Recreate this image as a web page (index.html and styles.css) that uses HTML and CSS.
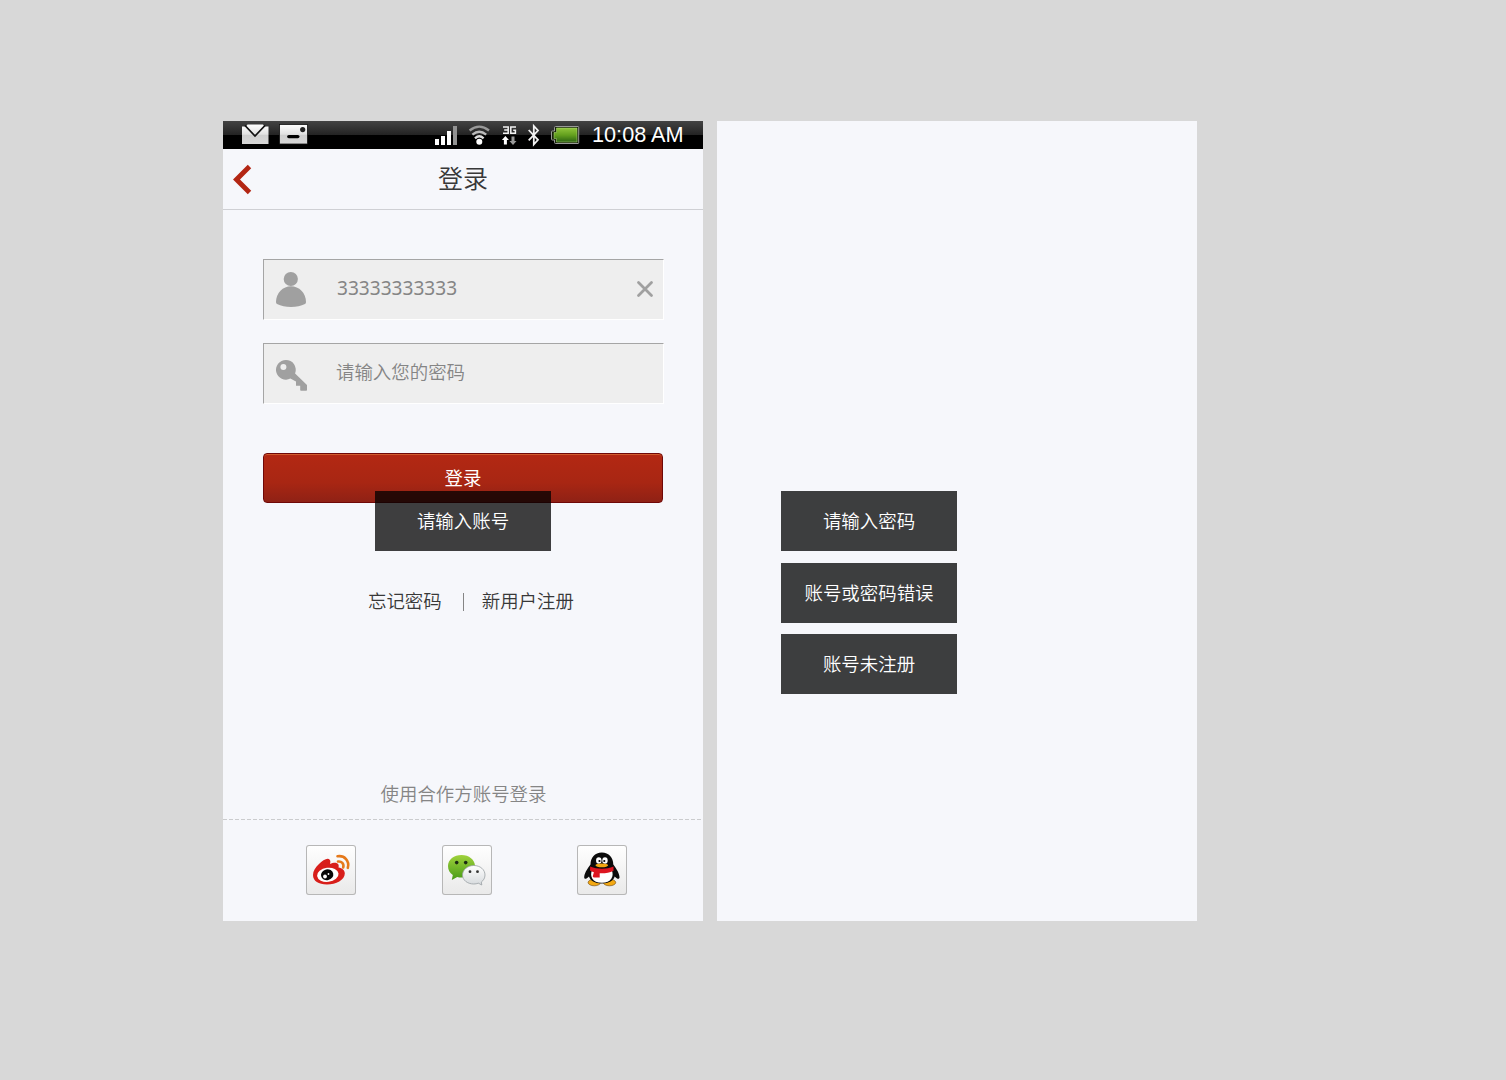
FILE: index.html
```html
<!DOCTYPE html>
<html lang="zh-CN">
<head>
<meta charset="utf-8">
<title>登录</title>
<link rel="stylesheet" href="styles.css">
</head>
<body>
<main class="board">
  <section class="screen">
    <div class="status">
      <svg class="status-icons" width="362" height="28" viewBox="0 0 362 28">
        <defs>
          <linearGradient id="paper" x1="0" y1="0" x2="0" y2="1"><stop offset="0" stop-color="#fff"/><stop offset=".5" stop-color="#e2e2e2"/><stop offset=".55" stop-color="#cfcfcf"/><stop offset="1" stop-color="#d8d8d8"/></linearGradient>
          <linearGradient id="cell" x1="0" y1="0" x2="0" y2="1"><stop offset="0" stop-color="#8fc43a"/><stop offset=".5" stop-color="#64a01e"/><stop offset="1" stop-color="#2c6412"/></linearGradient>
        </defs>
        <path d="M19 5.500h4l1.500-2h15.500l1.500 2H45.500V23H19z" fill="url(#paper)"/>
        <path d="M22 4.500l10 10.500L42 4.500" fill="none" stroke="#111" stroke-width="1.800"/>
        <rect x="56.500" y="3.500" width="28" height="19.500" fill="url(#paper)" stroke="#111" stroke-width=".8"/>
        <circle cx="79.700" cy="8.600" r="2.600" fill="#222"/>
        <path d="M65.800 15.600h9" stroke="#000" stroke-width="3.400" stroke-linecap="round"/>
        <path d="M212 18h4v6h-4zM218 15h4v9h-4zM224 10h4v14h-4z" fill="#fff"/>
        <path d="M230 5h4v19h-4z" fill="#929292"/>
        <g fill="none" stroke-width="2.300">
          <path d="M246.600 9.500q9.700-7.800 19.400 0" stroke="#999"/>
          <path d="M249.400 13.600q6.900-5.700 13.800 0" stroke="#bbb"/>
          <path d="M252 17.300q4.300-4 8.600 0" stroke="#ddd"/>
        </g>
        <circle cx="256.300" cy="20.800" r="3" fill="#fff"/>
        <path d="M280 6h5.200v6.200H280M281.200 9.100h4M293 6h-5.200v6.200h4.600V9.200h-2.200" fill="none" stroke="#f3f3f3" stroke-width="1.500"/>
        <path d="M282.400 15l3.500 4h-2v4.500h-3V19h-2z" fill="#fff"/>
        <path d="M290 24l3.500-4h-2v-4.500h-3V20h-2z" fill="#999"/>
        <path d="M305.700 9l9.300 9.800-4.200 4.700V5l4.200 4.500-9.300 9.800" fill="none" stroke="#f3f3f3" stroke-width="1.800"/>
        <path d="M332.500 5.500h22.500q.7 0 .7.700v15.600q0 .7-.7.700h-22.500q-1 0-1-1V19h-2.200q-.8 0-.8-.8v-7.400q0-.8.8-.8h2.200V6.500q0-1 1-1z" fill="#182509" stroke="#999" stroke-width="1"/>
        <path d="M333.500 7H354v14h-20.500v-3.500H331v-6h2.500z" fill="url(#cell)" stroke="#b7de80" stroke-width=".5"/>
      </svg>
      <span class="clock">10:08 AM</span>
    </div>
    <header class="bar">
      <svg class="back" width="40" height="60" viewBox="0 0 40 60"><path d="M26.500 17.500L13.500 30.400l13 13" fill="none" stroke="#b32613" stroke-width="4.900"/></svg>
      <h1 class="title">登录</h1>
    </header>
    <form class="form">
      <div class="field">
        <svg class="field-icon" width="73" height="59" viewBox="1 1 73 59"><circle cx="27.800" cy="20" r="7.100"/><path d="M13 43C13 34 20 27.300 28 27.300S43 34 43 43q0 1.500-1 2-6 3-14 3t-14-3q-1-.5-1-2z"/></svg>
        <span class="value">33333333333</span>
        <svg class="clear" width="36" height="59" viewBox="364 1 36 59"><path d="M375.500 23.500l13 13m0-13l-13 13" fill="none" stroke="#a0a0a0" stroke-width="2.800" stroke-linecap="round"/></svg>
      </div>
      <div class="field">
        <svg class="field-icon" width="73" height="59" viewBox="1 1 73 59"><path fill-rule="evenodd" d="M22.900 16.900a9.900 9.900 0 0 1 9.200 13.500L44 42v5q0 .8-.8.800H38q-.8 0-.8-.8v-4.200H33v-4.300l-1-.5L27.400 35.600A9.900 9.900 0 1 1 22.900 16.900zM20.400 20.900a3 3 0 1 0 0 6 3 3 0 1 0 0-6z"/></svg>
        <span class="value hint">请输入您的密码</span>
      </div>
      <div class="submit">登录</div>
      <div class="links"><span>忘记密码</span><i class="divider"></i><span>新用户注册</span></div>
    </form>
    <p class="partner">使用合作方账号登录</p>
    <svg class="dash" width="480" height="2" viewBox="0 0 480 2"><path d="M0 .5H478" stroke="#cbccce" stroke-dasharray="4 2"/></svg>
    <div class="social">
      <div class="tile"><svg width="50" height="50" viewBox="0 0 50 50">
        <path d="M23.500 14.500c1.200 1 1 3 .5 4.500 2-.7 4.500-1.500 6.500-1 2.300.6 2.500 2.500 2 4.500 3.700.7 6.300 2.500 6.300 6 0 6.500-8.800 11-17.800 11C12.500 39.500 7 36 7 30c0-4 2.500-8 6-11 3.500-3.500 8.500-6.500 10.500-4.500z" fill="#d81e1a"/>
        <ellipse cx="21.800" cy="29.800" rx="10.800" ry="7" transform="rotate(-7 21.800 29.800)" fill="#fff"/>
        <ellipse cx="21.200" cy="29.800" rx="6.200" ry="5.400" transform="rotate(-12 21 30)" fill="#080808"/>
        <circle cx="19" cy="31.500" r="1.900" fill="#fff"/><circle cx="22.500" cy="29" r=".9" fill="#fff"/>
        <path d="M32 16.500c3.500-.5 6.300 2.200 5.200 6M31.500 11.300c7-1.200 12.300 4.600 10.300 11.500" fill="none" stroke="#e5791a" stroke-width="2.600" stroke-linecap="round"/>
      </svg></div>
      <div class="tile"><svg width="50" height="50" viewBox="0 0 50 50">
        <defs><linearGradient id="leaf" x1="0" y1="0" x2="0" y2="1"><stop offset="0" stop-color="#a0d23c"/><stop offset="1" stop-color="#479b16"/></linearGradient><linearGradient id="pearl" x1="0" y1="0" x2="0" y2="1"><stop offset="0" stop-color="#fff"/><stop offset="1" stop-color="#d6dadd"/></linearGradient></defs>
        <path d="M19.500 10C27 10 33 14.700 33 21.200S27 32.500 19.500 32.500c-1.500 0-3-.2-4.300-.6L9.800 35l1-5C7.800 28 6 24.800 6 21 6 14.500 12 10 19.500 10z" fill="url(#leaf)"/>
        <circle cx="14.700" cy="17.600" r="1.800" fill="#1b2a13"/><circle cx="23.700" cy="17.600" r="1.800" fill="#1b2a13"/>
        <path d="M31.800 20.500c6.500 0 11.200 4.200 11.200 9.500 0 3-1.500 5.500-3.700 7l.5 3-3.500-1.800c-1.400.5-2.900.8-4.500.8-6.500 0-11.300-4-11.300-9s4.800-9.500 11.300-9.500z" fill="url(#pearl)" stroke="#999fa3" stroke-width=".8"/>
        <circle cx="28" cy="26.700" r="1.400" fill="#333"/><circle cx="35.500" cy="26.700" r="1.400" fill="#333"/>
      </svg></div>
      <div class="tile"><svg width="50" height="50" viewBox="0 0 50 50">
        <ellipse cx="17.300" cy="37.500" rx="6.200" ry="3.300" fill="#f3a812" stroke="#6a4105" stroke-width=".6"/><ellipse cx="32.500" cy="37.500" rx="6.200" ry="3.300" fill="#f3a812" stroke="#6a4105" stroke-width=".6"/>
        <path d="M24.800 7.500c7.200 0 11.500 5.300 11.500 12 3.500 4.500 6.200 9.500 6.200 12.800 0 2-2 2.200-4.800-.8-1.200 4-5.500 7-12.900 7-7.200 0-11.600-3-12.800-7-3 3-4.800 2.800-4.800.8 0-3.300 2.700-8.300 6.300-12.800 0-6.700 4.300-12 11.300-12z" fill="#0b0b0b"/>
        <path d="M15 25h19.800c2.500 6.500-.5 12.700-10 12.700S12.500 31.500 15 25z" fill="#fff"/>
        <ellipse cx="21.800" cy="15.500" rx="2.700" ry="3.300" fill="#fff"/><ellipse cx="28" cy="15.500" rx="2.700" ry="3.300" fill="#fff"/>
        <circle cx="22.500" cy="16" r="1.100"/><circle cx="27.300" cy="16" r="1.100"/>
        <ellipse cx="24.800" cy="20.300" rx="6.300" ry="1.900" fill="#f3a812"/>
        <path d="M13.200 21.500c7.500 3 16 3 23.300 0v4.300c-4 2.200-9 2.700-13.800 2.500v4.200h-6l-1-1 1.200-4.200c-1.500-.4-2.900-1-3.900-1.700z" fill="#dd1520"/>
      </svg></div>
    </div>
    <div class="toast floating">请输入账号</div>
  </section>
  <section class="screen notes">
    <div class="toast">请输入密码</div>
    <div class="toast">账号或密码错误</div>
    <div class="toast last">账号未注册</div>
  </section>
</main>
</body>
</html>
```
FILE: styles.css
```css
* { box-sizing: border-box; }
body {
  margin: 0;
  background: #d8d8d8;
  color: #383838;
  font-family: "Noto Sans CJK SC", sans-serif;
  font-size: 18.450px;
  font-weight: 350;
  line-height: 28px;
}
svg { display: block; flex: none; }
.board { display: flex; gap: 14px; padding: 121px 0 0 223px; }
.screen {
  position: relative;
  display: flex;
  flex-direction: column;
  width: 480px;
  height: 800px;
  background: #f6f7fb;
}
.status {
  display: flex;
  height: 28px;
  background: linear-gradient(#434343, #232323 14px, #000 14px);
}
.clock {
  margin-left: 7px;
  font: 400 21.700px/28px "Liberation Sans", Arial, sans-serif;
  color: #fff;
  white-space: nowrap;
}
.bar {
  display: flex;
  height: 61px;
  border-bottom: 1px solid #cfd0d4;
}
.title {
  flex: 1;
  margin: 0 40px 0 0;
  text-align: center;
  font-size: 25px;
  font-weight: 350;
  line-height: 57px;
}
.form { padding: 49px 39px 0 40px; }
.field {
  display: flex;
  height: 61px;
  margin-bottom: 23px;
  background: #eee;
  border: 1px solid #fff;
  border-top-color: #a5a5a5;
  border-left-color: #a5a5a5;
}
.field-icon { fill: #a0a0a0; }
.value {
  flex: 1;
  color: #858585;
  font-family: "Noto Sans", "Open Sans", sans-serif;
  font-size: 19.100px;
  font-weight: 400;
  line-height: 57px;
}
.hint {
  margin-left: -1px;
  font-family: "Noto Sans CJK SC", sans-serif;
  font-size: 18.450px;
  font-weight: 350;
  line-height: 55px;
}
.submit {
  width: 400px;
  height: 50px;
  margin-top: 49px;
  border: 1px solid #6f0808;
  border-radius: 4px;
  background: linear-gradient(#b32813, #a82613 60%, #8f2115);
  box-shadow: inset 0 1px #d05b2d;
  color: #fff;
  font-weight: 400;
  text-align: center;
  line-height: 47px;
}
.links {
  display: flex;
  align-items: center;
  height: 28px;
  margin: 85px 0 0 105px;
}
.links span { height: 28px; line-height: 24px; }
.divider { width: 1px; height: 18px; margin: 0 18px 0 21px; background: #858585; }
.partner { margin: 163px 0 0; height: 40px; padding-left: 1px; color: #858585; text-align: center; }
.social { display: flex; gap: 85.500px; margin-top: auto; padding: 0 0 26px 83px; }
.tile {
  width: 50px;
  height: 50px;
  border-radius: 3px;
  background: linear-gradient(#fff, #e9e9e9);
  box-shadow: inset 0 0 0 1px #b7b7b7;
}
.toast {
  width: 176px;
  height: 60px;
  background: #3d3e3f;
  color: #fff;
  text-align: center;
  line-height: 58px;
}
.floating { position: absolute; left: 152px; top: 370px; background: rgba(0, 0, 0, .75); }
.notes { gap: 12px; padding: 370px 0 0 64px; }
.last { margin-top: -1px; }
```
